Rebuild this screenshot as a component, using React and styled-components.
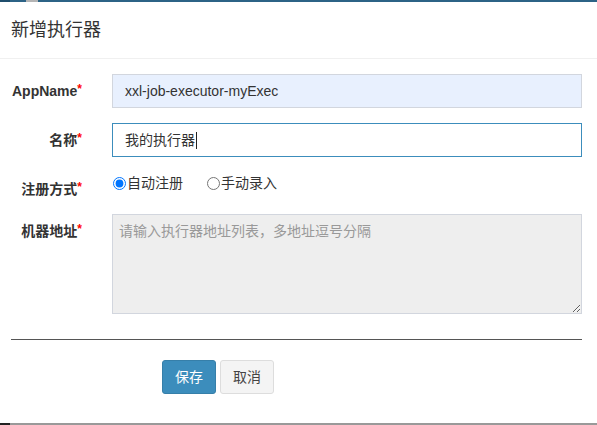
import styled, { createGlobalStyle } from "styled-components";

const GlobalStyle = createGlobalStyle`
  html, body {
    margin: 0;
    padding: 0;
    background: #fff;
  }
  body {
    font-family: "Liberation Sans", "Noto Sans CJK SC", sans-serif;
    font-size: 14px;
    color: #333;
  }
`;

const Page = styled.div`
  width: 597px;
  height: 425px;
  display: flex;
  flex-direction: column;
  overflow: hidden;
`;

const Strip = styled.div`
  display: flex;
  height: 2px;
  flex-shrink: 0;
`;

const Segment = styled.div`
  width: ${(p) => (p.$w ? `${p.$w}px` : "auto")};
  flex: ${(p) => (p.$w ? "none" : "1")};
  background: ${(p) => p.$color};
`;

const Header = styled.div`
  padding: 15px 15px 15px 11px;
  border-bottom: 1px solid #f0f0f0;
  h4 {
    margin: 0;
    font-size: 18px;
    line-height: 26px;
    font-weight: normal;
    color: #333;
  }
`;

const Body = styled.form`
  flex: 1;
  padding: 15px 0 0;
`;

const Row = styled.div`
  display: grid;
  grid-template-columns: 97px 1fr;
  margin-bottom: 15px;
`;

const Label = styled.label`
  text-align: right;
  padding: 7px 15px 0 0;
  font-weight: bold;
  line-height: 20px;
  color: #333;
  white-space: nowrap;
`;

const Star = styled.span`
  color: #f00;
  font-size: 12px;
  vertical-align: top;
  position: relative;
  top: -2px;
`;

const Control = styled.div`
  padding: 0 15px;
`;

const Field = styled.div`
  height: 34px;
  box-sizing: border-box;
  padding: 6px 12px;
  line-height: 20px;
  font-size: 14px;
  color: #333;
  display: flex;
  align-items: center;
  background: ${(p) => (p.$autofill ? "#e8f0fe" : "#fff")};
  border: 1px solid ${(p) => (p.$focus ? "#3c8dbc" : "#d2d6de")};
`;

const Caret = styled.span`
  display: inline-block;
  width: 1px;
  height: 17px;
  background: #222;
  margin-left: 1px;
`;

const Radios = styled.div`
  display: flex;
  gap: 23px;
  padding-top: 1px;
`;

const RadioLabel = styled.label`
  display: inline-flex;
  align-items: center;
  font-size: 14px;
  line-height: 20px;
  color: #333;
  input {
    margin: 0 1px 0 1px;
    width: 13px;
    height: 13px;
  }
`;

const TextArea = styled.textarea`
  display: block;
  width: 100%;
  height: 100px;
  box-sizing: border-box;
  padding: 6px 6px;
  background: #eee;
  border: 1px solid #d2d6de;
  font-family: "Liberation Sans", "Noto Sans CJK SC", sans-serif;
  font-size: 14px;
  line-height: 20px;
  outline: none;
  resize: vertical;
  &::placeholder {
    color: #999;
  }
`;

const Divider = styled.hr`
  margin: 25px 15px 0 11px;
  border: 0;
  border-top: 1px solid #555;
`;

const Actions = styled.div`
  display: flex;
  gap: 4px;
  padding: 20px 0 0 162px;
`;

const Button = styled.button`
  height: 34px;
  padding: 6px 12px;
  font-family: "Liberation Sans", "Noto Sans CJK SC", sans-serif;
  font-size: 14px;
  line-height: 20px;
  border-radius: 3px;
  border: 1px solid ${(p) => (p.$primary ? "#367fa9" : "#ddd")};
  background: ${(p) => (p.$primary ? "#3c8dbc" : "#f4f4f4")};
  color: ${(p) => (p.$primary ? "#fff" : "#444")};
`;

const Footer = styled.div`
  margin-top: auto;
`;

export default function App() {
  return (
    <>
      <GlobalStyle />
      <Page>
        <Strip>
          <Segment $w={10} $color="#1f4d6c" />
          <Segment $w={16} $color="#2c6386" />
          <Segment $w={12} $color="#b4b4b4" />
          <Segment $color="#2c6386" />
        </Strip>
        <Header>
          <h4>新增执行器</h4>
        </Header>
        <Body onSubmit={(e) => e.preventDefault()}>
          <Row>
            <Label>
              AppName<Star>*</Star>
            </Label>
            <Control>
              <Field $autofill>xxl-job-executor-myExec</Field>
            </Control>
          </Row>
          <Row>
            <Label>
              名称<Star>*</Star>
            </Label>
            <Control>
              <Field $focus>
                我的执行器
                <Caret />
              </Field>
            </Control>
          </Row>
          <Row>
            <Label>
              注册方式<Star>*</Star>
            </Label>
            <Control>
              <Radios>
                <RadioLabel>
                  <input type="radio" name="addressType" defaultChecked />
                  自动注册
                </RadioLabel>
                <RadioLabel>
                  <input type="radio" name="addressType" />
                  手动录入
                </RadioLabel>
              </Radios>
            </Control>
          </Row>
          <Row>
            <Label>
              机器地址<Star>*</Star>
            </Label>
            <Control>
              <TextArea readOnly placeholder="请输入执行器地址列表，多地址逗号分隔" />
            </Control>
          </Row>
          <Divider />
          <Actions>
            <Button type="button" $primary>
              保存
            </Button>
            <Button type="button">取消</Button>
          </Actions>
        </Body>
        <Footer>
          <Strip>
            <Segment $w={10} $color="#222" />
            <Segment $color="#999" />
          </Strip>
        </Footer>
      </Page>
    </>
  );
}
